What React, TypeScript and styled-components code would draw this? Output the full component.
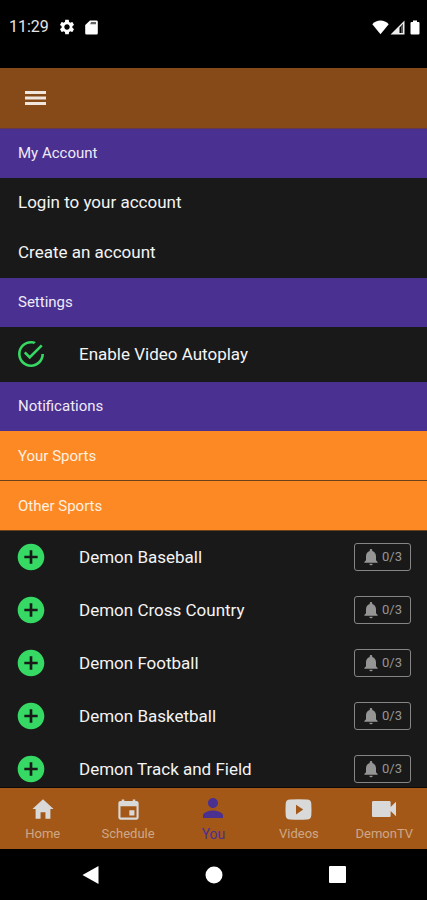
import React from "react";
import styled, { createGlobalStyle } from "styled-components";
import {
  MdAddCircle,
  MdNotifications,
  MdPerson,
  MdSettings,
  MdVideocam,
} from "react-icons/md";
import {
  IoMdCalendar,
  IoMdCheckmarkCircleOutline,
  IoMdHome,
} from "react-icons/io";

const GlobalStyle = createGlobalStyle`
  * { box-sizing: border-box; }
  body { margin: 0; background: #000; font-family: Roboto, sans-serif; color: #f4f4f4; }
  button { font: inherit; color: inherit; background: none; border: 0; padding: 0; cursor: pointer; }
  a { color: inherit; text-decoration: none; }
  svg { display: block; flex: none; }
`;

const Screen = styled.div`
  display: flex;
  flex-direction: column;
  height: 100vh;
  background: #191919;
`;

const StatusBar = styled.div`
  display: flex;
  justify-content: space-between;
  flex: none;
  height: 68px;
  padding: 17px 7px 0 9px;
  background: #000;
  color: #fff;
`;

const StatusGroup = styled.div<{ $gap: number }>`
  display: flex;
  align-items: center;
  gap: ${(p) => p.$gap}px;
  height: 20px;
`;

const Clock = styled.span`
  font-size: 16px;
  line-height: 22px;
  color: #e6e6e6;
`;

const BatterySlot = styled.span`
  margin-left: 4px;
`;

const Header = styled.header`
  display: flex;
  align-items: center;
  flex: none;
  height: 61px;
  padding: 0 24px;
  background: #854a18;
  border-bottom: 1px solid #64394c;
`;

const MenuButton = styled.button`
  display: flex;
  color: #f1e6dd;
`;

const Content = styled.main`
  flex: 1;
  min-height: 0;
  overflow-y: auto;
  scrollbar-width: none;
  border-bottom: 1px solid #0c0a0a;
`;

const SectionTitle = styled.h2<{ $tone?: "purple" | "orange" }>`
  display: flex;
  align-items: center;
  height: ${(p) => (p.$tone === "orange" ? 50 : 49)}px;
  margin: 0;
  padding: 0 18px ${(p) => (p.$tone === "orange" ? 0 : 2)}px;
  font-size: 15px;
  font-weight: 400;
  line-height: 20px;
  color: ${(p) => (p.$tone === "orange" ? "#fff0e0" : "#efeaf8")};
  background: ${(p) => (p.$tone === "orange" ? "#fd8925" : "#4a3090")};
  border-bottom: ${(p) => (p.$tone === "orange" ? "1px solid #6b4119" : "0")};
`;

const LinkRow = styled.a`
  display: flex;
  align-items: center;
  height: 50px;
  padding: 0 18px 2px;
  font-size: 17px;
  line-height: 22px;
`;

const ToggleRow = styled.label`
  display: flex;
  align-items: center;
  height: 55px;
  padding: 0 15px 2px;
  font-size: 17px;
  line-height: 22px;
  cursor: pointer;
`;

const HiddenCheckbox = styled.input`
  position: absolute;
  opacity: 0;
  width: 32px;
  height: 32px;
  margin: 0;
`;

const GreenMark = styled.span`
  display: flex;
  margin-right: 32px;
  color: #35d963;
`;

const SportList = styled.ul`
  list-style: none;
  margin: 0;
  padding: 0;
`;

const SportRow = styled.li`
  display: flex;
  align-items: center;
  height: 53px;
  padding: 0 16px 2px 15px;
  font-size: 17px;
  line-height: 22px;
`;

const AddButton = styled.button`
  display: flex;
  margin-right: 32px;
  color: #35d963;
`;

const SportName = styled.span`
  flex: 1;
`;

const AlertButton = styled.button`
  display: flex;
  align-items: center;
  justify-content: center;
  gap: 1px;
  width: 57px;
  height: 28px;
  padding-right: 2px;
  border: 1px solid #858585;
  border-radius: 3px;
  color: #959595;
  font-size: 13px;
  line-height: 16px;
`;

const TabBar = styled.nav`
  display: grid;
  grid-template-columns: repeat(5, 1fr);
  flex: none;
  height: 61px;
  background: #a35818;
`;

const Tab = styled.a<{ $active?: boolean }>`
  display: flex;
  flex-direction: column;
  align-items: center;
  padding-top: ${(p) => (p.$active ? 5 : 7)}px;
  color: ${(p) => (p.$active ? "#4a3090" : "#d9d9d9")};
`;

const TabIcon = styled.span<{ $active?: boolean }>`
  display: flex;
  align-items: center;
  height: ${(p) => (p.$active ? 30 : 28)}px;
`;

const TabLabel = styled.span<{ $active?: boolean }>`
  margin-top: 3px;
  font-size: ${(p) => (p.$active ? 14 : 13)}px;
  line-height: 16px;
  color: ${(p) => (p.$active ? "#4a3090" : "#cda888")};
`;

const SystemBar = styled.div`
  display: flex;
  justify-content: center;
  align-items: center;
  flex: none;
  gap: 106px;
  height: 51px;
  background: #000;
  color: #fff;
`;

const SystemButton = styled.button`
  display: flex;
  color: #fff;
`;

const SdCardIcon = () => (
  <svg width="13" height="15" viewBox="0 0 13 15">
    <path d="M5 .5h6.5A1.3 1.3 0 0 1 12.8 1.8v11.4a1.3 1.3 0 0 1-1.3 1.3h-10A1.3 1.3 0 0 1 .2 13.2V5z" fill="#fff" />
    <path d="M6 2h5v2.300H5.200z" fill="#666" />
  </svg>
);

const WifiIcon = () => (
  <svg width="17" height="15" viewBox="0 0 17 15">
    <path d="M8.5 14.3L.3 4.2C2.5 1.8 5.3.6 8.5.6s6 1.200 8.200 3.600z" fill="#fff" />
  </svg>
);

const SignalIcon = () => (
  <svg width="15" height="15" viewBox="0 0 15 15">
    <path fillRule="evenodd" d="M14.5.4v14H.5zM13 4L9.5 7.5V13H13z" fill="#eee" />
    <path d="M11 6.500L13 4.400V13h-2z" fill="#555" />
  </svg>
);

const BatteryIcon = () => (
  <svg width="10" height="15" viewBox="0 0 10 15">
    <path d="M3 .5h4V2h1.500a1 1 0 0 1 1 1v10.500a1 1 0 0 1-1 1h-7a1 1 0 0 1-1-1V3a1 1 0 0 1 1-1H3z" fill="#fff" />
  </svg>
);

const MenuIcon = () => (
  <svg width="22" height="16" viewBox="0 0 22 16">
    <path d="M1 1h21v3H1zM1 6.500h21v3H1zM1 12h21v3H1z" fill="currentColor" />
  </svg>
);

const VideoIcon = () => (
  <svg width="27" height="21" viewBox="0 0 27 21">
    <path
      fillRule="evenodd"
      d="M5 .5Q13.5 0 22 .5Q26 .7 26.3 4.5Q26.7 10.5 26.3 16.5Q26 20.3 22 20.5Q13.5 21 5 20.5Q1 20.3.7 16.5Q.3 10.5.7 4.5Q1 .7 5 .5zM11 5.8v9.600l7.200-4.800z"
      fill="currentColor"
    />
  </svg>
);

const sports = [
  "Demon Baseball",
  "Demon Cross Country",
  "Demon Football",
  "Demon Basketball",
  "Demon Track and Field",
];

const tabs = [
  { label: "Home", icon: <IoMdHome size={26} /> },
  { label: "Schedule", icon: <IoMdCalendar size={27} /> },
  { label: "You", icon: <MdPerson size={30} />, active: true },
  { label: "Videos", icon: <VideoIcon /> },
  { label: "DemonTV", icon: <MdVideocam size={32} /> },
];

export default function App() {
  return (
    <>
      <GlobalStyle />
      <Screen>
        <StatusBar>
          <StatusGroup $gap={9}>
            <Clock>11:29</Clock>
            <MdSettings size={18} />
            <SdCardIcon />
          </StatusGroup>
          <StatusGroup $gap={1}>
            <WifiIcon />
            <SignalIcon />
            <BatterySlot>
              <BatteryIcon />
            </BatterySlot>
          </StatusGroup>
        </StatusBar>

        <Header>
          <MenuButton aria-label="Menu">
            <MenuIcon />
          </MenuButton>
        </Header>

        <Content>
          <SectionTitle>My Account</SectionTitle>
          <LinkRow href="#login">Login to your account</LinkRow>
          <LinkRow href="#create">Create an account</LinkRow>
          <SectionTitle>Settings</SectionTitle>
          <ToggleRow>
            <HiddenCheckbox type="checkbox" defaultChecked />
            <GreenMark>
              <IoMdCheckmarkCircleOutline size={32} />
            </GreenMark>
            Enable Video Autoplay
          </ToggleRow>
          <SectionTitle>Notifications</SectionTitle>
          <SectionTitle $tone="orange">Your Sports</SectionTitle>
          <SectionTitle $tone="orange">Other Sports</SectionTitle>
          <SportList>
            {sports.map((name) => (
              <SportRow key={name}>
                <AddButton aria-label={`Add ${name}`}>
                  <MdAddCircle size={32} />
                </AddButton>
                <SportName>{name}</SportName>
                <AlertButton aria-label={`${name} alerts, 0 of 3`}>
                  <MdNotifications size={20} />
                  0/3
                </AlertButton>
              </SportRow>
            ))}
          </SportList>
        </Content>

        <TabBar>
          {tabs.map((t) => (
            <Tab key={t.label} href={`#${t.label.toLowerCase()}`} $active={t.active}>
              <TabIcon $active={t.active}>{t.icon}</TabIcon>
              <TabLabel $active={t.active}>{t.label}</TabLabel>
            </Tab>
          ))}
        </TabBar>

        <SystemBar>
          <SystemButton aria-label="Back">
            <svg width="17" height="20" viewBox="0 0 17 20">
              <path d="M16.5 1v18L.5 10z" fill="currentColor" />
            </svg>
          </SystemButton>
          <SystemButton aria-label="Home screen">
            <svg width="18" height="18" viewBox="0 0 18 18">
              <circle cx="9" cy="9" r="8.5" fill="currentColor" />
            </svg>
          </SystemButton>
          <SystemButton aria-label="Recent apps">
            <svg width="17" height="17" viewBox="0 0 17 17">
              <rect width="17" height="17" rx="1" fill="currentColor" />
            </svg>
          </SystemButton>
        </SystemBar>
      </Screen>
    </>
  );
}
